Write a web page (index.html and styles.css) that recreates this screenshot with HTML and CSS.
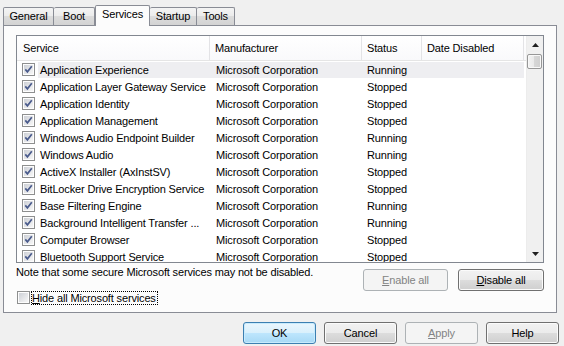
FILE: index.html
```html
<!DOCTYPE html>
<html>
<head>
<meta charset="utf-8">
<link rel="stylesheet" href="styles.css">
</head>
<body>
<svg class="defs" width="0" height="0">
  <defs>
    <linearGradient id="cbg" x1="0" y1="0" x2="1" y2="1">
      <stop offset="0" stop-color="#cdd0d6"/>
      <stop offset="1" stop-color="#f7f7f7"/>
    </linearGradient>
    <symbol id="cbox" viewBox="0 0 13 13">
      <rect x="0.5" y="0.5" width="12" height="12" fill="#fdfdfd" stroke="#8e8f8f"/>
      <rect x="2" y="2" width="9" height="9" fill="url(#cbg)"/>
    </symbol>
    <symbol id="cbox-checked" viewBox="0 0 13 13">
      <rect x="0.5" y="0.5" width="12" height="12" fill="#fdfdfd" stroke="#8e8f8f"/>
      <rect x="2" y="2" width="9" height="9" fill="url(#cbg)"/>
      <path d="M3.3 6.4 L5.4 8.8 L9.8 3.2" fill="none" stroke="#4a5b8c" stroke-width="1.7"/>
    </symbol>
  </defs>
</svg>
<div class="dialog">
  <div class="tabs">
    <div class="tab w-general">General</div>
    <div class="tab w-boot">Boot</div>
    <div class="tab active w-services">Services</div>
    <div class="tab w-startup">Startup</div>
    <div class="tab w-tools">Tools</div>
  </div>
  <div class="panel">
    <div class="listbox">
      <div class="list-content">
        <div class="header">
          <div class="hcell c-service">Service</div>
          <div class="hcell c-manu">Manufacturer</div>
          <div class="hcell c-status">Status</div>
          <div class="hcell c-date">Date Disabled</div>
        </div>
        <div class="row">
          <svg class="cb"><use href="#cbox-checked"/></svg>
          <div class="item hover"><span>Application Experience</span><span>Microsoft Corporation</span><span>Running</span><span></span></div>
        </div>
        <div class="row">
          <svg class="cb"><use href="#cbox-checked"/></svg>
          <div class="item"><span>Application Layer Gateway Service</span><span>Microsoft Corporation</span><span>Stopped</span><span></span></div>
        </div>
        <div class="row">
          <svg class="cb"><use href="#cbox-checked"/></svg>
          <div class="item"><span>Application Identity</span><span>Microsoft Corporation</span><span>Stopped</span><span></span></div>
        </div>
        <div class="row">
          <svg class="cb"><use href="#cbox-checked"/></svg>
          <div class="item"><span>Application Management</span><span>Microsoft Corporation</span><span>Stopped</span><span></span></div>
        </div>
        <div class="row">
          <svg class="cb"><use href="#cbox-checked"/></svg>
          <div class="item"><span>Windows Audio Endpoint Builder</span><span>Microsoft Corporation</span><span>Running</span><span></span></div>
        </div>
        <div class="row">
          <svg class="cb"><use href="#cbox-checked"/></svg>
          <div class="item"><span>Windows Audio</span><span>Microsoft Corporation</span><span>Running</span><span></span></div>
        </div>
        <div class="row">
          <svg class="cb"><use href="#cbox-checked"/></svg>
          <div class="item"><span>ActiveX Installer (AxInstSV)</span><span>Microsoft Corporation</span><span>Stopped</span><span></span></div>
        </div>
        <div class="row">
          <svg class="cb"><use href="#cbox-checked"/></svg>
          <div class="item"><span>BitLocker Drive Encryption Service</span><span>Microsoft Corporation</span><span>Stopped</span><span></span></div>
        </div>
        <div class="row">
          <svg class="cb"><use href="#cbox-checked"/></svg>
          <div class="item"><span>Base Filtering Engine</span><span>Microsoft Corporation</span><span>Running</span><span></span></div>
        </div>
        <div class="row">
          <svg class="cb"><use href="#cbox-checked"/></svg>
          <div class="item"><span>Background Intelligent Transfer ...</span><span>Microsoft Corporation</span><span>Running</span><span></span></div>
        </div>
        <div class="row">
          <svg class="cb"><use href="#cbox-checked"/></svg>
          <div class="item"><span>Computer Browser</span><span>Microsoft Corporation</span><span>Stopped</span><span></span></div>
        </div>
        <div class="row">
          <svg class="cb"><use href="#cbox-checked"/></svg>
          <div class="item"><span>Bluetooth Support Service</span><span>Microsoft Corporation</span><span>Stopped</span><span></span></div>
        </div>
      </div>
      <div class="scrollbar">
        <div class="sb-btn"><svg width="7" height="4" viewBox="0 0 7 4"><path d="M3.5 0 L7 4 L0 4 Z" fill="#1f1f1f"/></svg></div>
        <div class="sb-track"><div class="sb-thumb"></div></div>
        <div class="sb-btn"><svg width="7" height="4" viewBox="0 0 7 4"><path d="M0 0 L7 0 L3.5 4 Z" fill="#1f1f1f"/></svg></div>
      </div>
    </div>
    <div class="note-row">
      <div class="note">Note that some secure Microsoft services may not be disabled.</div>
      <div class="note-buttons">
        <button class="btn disabled w-enable"><u>E</u>nable all</button>
        <button class="btn w-disable"><u>D</u>isable all</button>
      </div>
    </div>
    <div class="hide-row">
      <svg class="cb"><use href="#cbox"/></svg>
      <span class="focus"><u>H</u>ide all Microsoft services</span>
    </div>
  </div>
  <div class="footer">
    <button class="btn default">OK</button>
    <button class="btn">Cancel</button>
    <button class="btn disabled"><u>A</u>pply</button>
    <button class="btn">Help</button>
  </div>
</div>
</body>
</html>
```
FILE: styles.css
```css
* { box-sizing: border-box; }
html, body {
  margin: 0;
  padding: 0;
}
body {
  width: 564px;
  height: 346px;
  overflow: hidden;
  background: #f0f0f0;
  font-family: "Liberation Sans", Arial, sans-serif;
  font-size: 11px;
  letter-spacing: -0.15px;
  color: #000;
}
.defs { position: absolute; width: 0; height: 0; }
.dialog { padding-top: 5px; }

/* tabs */
.tabs {
  display: flex;
  align-items: flex-end;
  height: 20px;
  padding-left: 3px;
}
.tab {
  height: 18px;
  border: 1px solid #898c95;
  border-bottom: none;
  border-radius: 2px 2px 0 0;
  background: linear-gradient(#f4f4f4 0%, #ebebeb 50%, #dcdcdc 50%, #d3d3d3 100%);
  text-align: center;
  line-height: 17px;
}
.tab.active {
  position: relative;
  z-index: 1;
  height: 21px;
  margin-bottom: -1px;
  background: #fcfcfc;
  line-height: 17px;
}
.w-general { width: 51px; }
.w-boot { width: 41px; border-left: none; }
.w-services { width: 55px; }
.w-startup { width: 47px; border-left: none; }
.w-tools { width: 38px; border-left: none; }

/* panel */
.panel {
  margin-left: 3px;
  width: 554px;
  height: 288px;
  border: 1px solid #898c95;
  background: #fcfcfc;
  padding: 9px 12px 0 12px;
}
.listbox {
  display: flex;
  height: 228px;
  border: 1px solid #828790;
  background: #fff;
  overflow: hidden;
}
.list-content {
  width: 509px;
  overflow: hidden;
}
.header {
  display: grid;
  grid-template-columns: 193px 152px 60px 102px;
  height: 25px;
  border-bottom: 1px solid #e5e5e5;
  background: linear-gradient(#ffffff, #f9f9fb);
}
.hcell {
  line-height: 24px;
  padding-left: 5px;
  border-right: 1px solid #e3e3e6;
  white-space: nowrap;
}
.c-service { padding-left: 6px; }

.row {
  display: grid;
  grid-template-columns: 21px 486px;
  height: 17px;
  align-items: center;
}
.row .cb { margin-left: 5px; }
.cb {
  width: 13px;
  height: 13px;
  display: block;
}
.item {
  display: grid;
  grid-template-columns: 172px 152px 60px 102px;
  height: 16px;
  line-height: 16px;
  white-space: nowrap;
}
.item span { overflow: hidden; padding-left: 5px; }
.item span:first-child { padding-left: 2px; }
.item span:nth-child(2) { padding-left: 6px; }
.item.hover { background: #eeeef1; }

/* scrollbar */
.scrollbar {
  width: 17px;
  display: flex;
  flex-direction: column;
  background: #f0f0f0;
  border-left: 1px solid #ececec;
}
.sb-btn {
  height: 17px;
  display: flex;
  align-items: center;
  justify-content: center;
}
.sb-track {
  flex: 1;
  padding: 1px 1px 0 0;
}
.sb-thumb {
  height: 15px;
  border: 1px solid #979797;
  border-radius: 2px;
  background: linear-gradient(90deg, #f3f3f3, #e8e8e8 50%, #d6d6d6 50%, #cfcfcf);
  box-shadow: inset 0 0 0 1px #f8f8f8;
}

/* note + buttons */
.note-row {
  display: flex;
  justify-content: space-between;
  align-items: flex-start;
  margin-top: 2px;
}
.note {
  line-height: 15px;
  white-space: nowrap;
}
.note-buttons {
  display: flex;
  gap: 10px;
  margin-top: 4px;
}
.btn {
  font-family: inherit;
  font-size: 11px;
  letter-spacing: inherit;
  color: #000;
  height: 22px;
  width: 73px;
  padding: 0;
  border: 1px solid #707070;
  border-radius: 3px;
  background: linear-gradient(#f2f2f2 0%, #ebebeb 50%, #dddddd 50%, #cfcfcf 100%);
  box-shadow: inset 0 0 0 1px #fbfbfb;
  text-align: center;
}
.btn u { text-decoration: underline; }
.btn.default {
  border-color: #3c7fb1;
  background: linear-gradient(#eaf6fd 0%, #d9f0fc 50%, #bee6fd 50%, #a7d9f5 100%);
  box-shadow: inset 0 0 0 1px #c8ebfd;
}
.btn.disabled {
  border-color: #adb2b5;
  background: #f4f4f4;
  box-shadow: none;
  color: #838383;
}
.w-enable { width: 85px; }
.w-disable { width: 86px; }

.hide-row {
  display: flex;
  align-items: center;
  height: 13px;
  gap: 1px;
}
.hide-row .cb { margin-left: 1px; }
.focus {
  border: 1px dotted #000;
  line-height: 12px;
  padding: 0 1px 0 0;
  white-space: nowrap;
}

/* footer */
.footer {
  display: flex;
  justify-content: flex-end;
  gap: 8px;
  padding-right: 5px;
  margin-top: 9px;
}
```
